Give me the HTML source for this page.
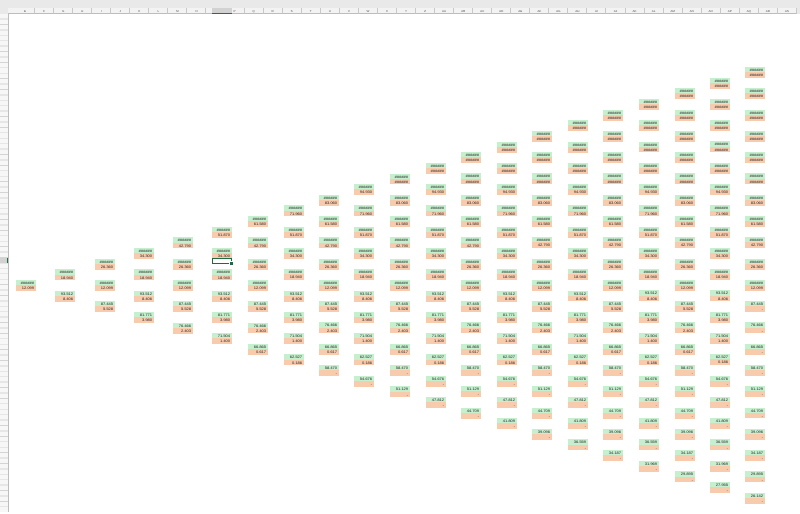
<!DOCTYPE html>
<html><head><meta charset="utf-8"><style>
html,body{margin:0;padding:0;background:#fff;width:800px;height:512px;overflow:hidden;font-family:"Liberation Sans",sans-serif}
#top{position:absolute;left:0;top:0;width:800px;height:14px;background:#e9e9e9}
#hdr{position:absolute;left:16px;top:8px;height:6px;display:flex;background:#f3f3f3}
#hdr span{width:19.05px;height:6px;box-sizing:border-box;border-right:1px solid #c8c8c8;border-bottom:1px solid #bdbdbd;font-size:3px;line-height:6px;text-align:center;color:#555}
#nar{position:absolute;left:8px;top:8px;width:8px;height:6px;background:#f3f3f3;border-bottom:1px solid #bdbdbd;box-sizing:border-box}
#rows{position:absolute;left:0;top:14px;width:8px;height:498px;background:repeating-linear-gradient(#f7f7f7 0 4.6px,#d4d4d4 4.6px 5.42px);border-right:1px solid #bdbdbd}
#selc{position:absolute;left:212px;top:8px;width:20px;height:6px;background:#d2d2d2;border-bottom:1.5px solid #217346;box-sizing:border-box}
#selr{position:absolute;left:0;top:258px;width:8px;height:5.4px;background:#d2d2d2;border-right:1.5px solid #217346;box-sizing:border-box}
#box{position:absolute;left:211.5px;top:257.5px;width:20px;height:6px;border:1.3px solid #1e6b3f;box-sizing:border-box}
#box:after{content:"";position:absolute;right:-3px;bottom:-3px;width:3px;height:3px;background:#1e6b3f;border:0.5px solid #fff}
.c{position:absolute;width:20px}
.c p{margin:0 0 10.3px;width:20px}
.c b,.c u{display:block;text-decoration:none;font-weight:normal;font-size:4px;text-align:right;padding-right:2px;box-sizing:border-box;color:#222;overflow:hidden;white-space:nowrap}
.c b{height:5.2px;line-height:5.2px;background:#c6efce}
.c u{height:5.8px;line-height:5.8px;background:#f8cbad}
</style></head><body>
<div id="top"></div>
<div id="nar"></div>
<div id="hdr"><span>E</span><span>F</span><span>G</span><span>H</span><span>I</span><span>J</span><span>K</span><span>L</span><span>M</span><span>N</span><span>O</span><span>P</span><span>Q</span><span>R</span><span>S</span><span>T</span><span>U</span><span>V</span><span>W</span><span>X</span><span>Y</span><span>Z</span><span>AA</span><span>AB</span><span>AC</span><span>AD</span><span>AE</span><span>AF</span><span>AG</span><span>AH</span><span>AI</span><span>AJ</span><span>AK</span><span>AL</span><span>AM</span><span>AN</span><span>AO</span><span>AP</span><span>AQ</span><span>AR</span><span>AS</span></div>
<div id="selc"></div>
<div id="rows"></div>
<div id="selr"></div>

<div class="c" style="left:16px;top:280px"><p><b>######</b><u>12.099</u></p></div>

<div class="c" style="left:55px;top:269.35px"><p><b>######</b><u>18.940</u><p><b>93.512</b><u>8.406</u></p></div>

<div class="c" style="left:95px;top:258.7px"><p><b>######</b><u>26.360</u><p><b>######</b><u>12.099</u><p><b>87.445</b><u>5.528</u></p></div>

<div class="c" style="left:134px;top:248.05px"><p><b>######</b><u>34.300</u><p><b>######</b><u>18.940</u><p><b>93.512</b><u>8.406</u><p><b>81.771</b><u>3.980</u></p></div>

<div class="c" style="left:173px;top:237.4px"><p><b>######</b><u>42.790</u><p><b>######</b><u>26.360</u><p><b>######</b><u>12.099</u><p><b>87.445</b><u>5.528</u><p><b>76.466</b><u>2.403</u></p></div>

<div class="c" style="left:212px;top:226.75px"><p><b>######</b><u>51.870</u><p><b>######</b><u>34.300</u><p><b>######</b><u>18.940</u><p><b>93.512</b><u>8.406</u><p><b>81.771</b><u>3.980</u><p><b>71.504</b><u>1.400</u></p></div>

<div class="c" style="left:248px;top:216.1px"><p><b>######</b><u>61.580</u><p><b>######</b><u>42.790</u><p><b>######</b><u>26.360</u><p><b>######</b><u>12.099</u><p><b>87.445</b><u>5.528</u><p><b>76.466</b><u>2.403</u><p><b>66.865</b><u>0.617</u></p></div>

<div class="c" style="left:284px;top:205.45px"><p><b>######</b><u>71.960</u><p><b>######</b><u>51.870</u><p><b>######</b><u>34.300</u><p><b>######</b><u>18.940</u><p><b>93.512</b><u>8.406</u><p><b>81.771</b><u>3.980</u><p><b>71.504</b><u>1.400</u><p><b>62.527</b><u>0.186</u></p></div>

<div class="c" style="left:319px;top:194.8px"><p><b>######</b><u>83.060</u><p><b>######</b><u>61.580</u><p><b>######</b><u>42.790</u><p><b>######</b><u>26.360</u><p><b>######</b><u>12.099</u><p><b>87.445</b><u>5.528</u><p><b>76.466</b><u>2.403</u><p><b>66.865</b><u>0.617</u><p><b>58.470</b><u>-</u></p></div>

<div class="c" style="left:354px;top:184.15px"><p><b>######</b><u>94.930</u><p><b>######</b><u>71.960</u><p><b>######</b><u>51.870</u><p><b>######</b><u>34.300</u><p><b>######</b><u>18.940</u><p><b>93.512</b><u>8.406</u><p><b>81.771</b><u>3.980</u><p><b>71.504</b><u>1.400</u><p><b>62.527</b><u>0.186</u><p><b>54.676</b><u>-</u></p></div>

<div class="c" style="left:390px;top:173.5px"><p><b>######</b><u>######</u><p><b>######</b><u>83.060</u><p><b>######</b><u>61.580</u><p><b>######</b><u>42.790</u><p><b>######</b><u>26.360</u><p><b>######</b><u>12.099</u><p><b>87.445</b><u>5.528</u><p><b>76.466</b><u>2.403</u><p><b>66.865</b><u>0.617</u><p><b>58.470</b><u>-</u><p><b>51.129</b><u>-</u></p></div>

<div class="c" style="left:426px;top:162.85px"><p><b>######</b><u>######</u><p><b>######</b><u>94.930</u><p><b>######</b><u>71.960</u><p><b>######</b><u>51.870</u><p><b>######</b><u>34.300</u><p><b>######</b><u>18.940</u><p><b>93.512</b><u>8.406</u><p><b>81.771</b><u>3.980</u><p><b>71.504</b><u>1.400</u><p><b>62.527</b><u>0.186</u><p><b>54.676</b><u>-</u><p><b>47.812</b><u>-</u></p></div>

<div class="c" style="left:461px;top:152.2px"><p><b>######</b><u>######</u><p><b>######</b><u>######</u><p><b>######</b><u>83.060</u><p><b>######</b><u>61.580</u><p><b>######</b><u>42.790</u><p><b>######</b><u>26.360</u><p><b>######</b><u>12.099</u><p><b>87.445</b><u>5.528</u><p><b>76.466</b><u>2.403</u><p><b>66.865</b><u>0.617</u><p><b>58.470</b><u>-</u><p><b>51.129</b><u>-</u><p><b>44.709</b><u>-</u></p></div>

<div class="c" style="left:497px;top:141.55px"><p><b>######</b><u>######</u><p><b>######</b><u>######</u><p><b>######</b><u>94.930</u><p><b>######</b><u>71.960</u><p><b>######</b><u>51.870</u><p><b>######</b><u>34.300</u><p><b>######</b><u>18.940</u><p><b>93.512</b><u>8.406</u><p><b>81.771</b><u>3.980</u><p><b>71.504</b><u>1.400</u><p><b>62.527</b><u>0.186</u><p><b>54.676</b><u>-</u><p><b>47.812</b><u>-</u><p><b>41.809</b><u>-</u></p></div>

<div class="c" style="left:532px;top:130.9px"><p><b>######</b><u>######</u><p><b>######</b><u>######</u><p><b>######</b><u>######</u><p><b>######</b><u>83.060</u><p><b>######</b><u>61.580</u><p><b>######</b><u>42.790</u><p><b>######</b><u>26.360</u><p><b>######</b><u>12.099</u><p><b>87.445</b><u>5.528</u><p><b>76.466</b><u>2.403</u><p><b>66.865</b><u>0.617</u><p><b>58.470</b><u>-</u><p><b>51.129</b><u>-</u><p><b>44.709</b><u>-</u><p><b>39.096</b><u>-</u></p></div>

<div class="c" style="left:568px;top:120.25px"><p><b>######</b><u>######</u><p><b>######</b><u>######</u><p><b>######</b><u>######</u><p><b>######</b><u>94.930</u><p><b>######</b><u>71.960</u><p><b>######</b><u>51.870</u><p><b>######</b><u>34.300</u><p><b>######</b><u>18.940</u><p><b>93.512</b><u>8.406</u><p><b>81.771</b><u>3.980</u><p><b>71.504</b><u>1.400</u><p><b>62.527</b><u>0.186</u><p><b>54.676</b><u>-</u><p><b>47.812</b><u>-</u><p><b>41.809</b><u>-</u><p><b>36.559</b><u>-</u></p></div>

<div class="c" style="left:603px;top:109.6px"><p><b>######</b><u>######</u><p><b>######</b><u>######</u><p><b>######</b><u>######</u><p><b>######</b><u>######</u><p><b>######</b><u>83.060</u><p><b>######</b><u>61.580</u><p><b>######</b><u>42.790</u><p><b>######</b><u>26.360</u><p><b>######</b><u>12.099</u><p><b>87.445</b><u>5.528</u><p><b>76.466</b><u>2.403</u><p><b>66.865</b><u>0.617</u><p><b>58.470</b><u>-</u><p><b>51.129</b><u>-</u><p><b>44.709</b><u>-</u><p><b>39.096</b><u>-</u><p><b>34.187</b><u>-</u></p></div>

<div class="c" style="left:639px;top:98.95px"><p><b>######</b><u>######</u><p><b>######</b><u>######</u><p><b>######</b><u>######</u><p><b>######</b><u>######</u><p><b>######</b><u>94.930</u><p><b>######</b><u>71.960</u><p><b>######</b><u>51.870</u><p><b>######</b><u>34.300</u><p><b>######</b><u>18.940</u><p><b>93.512</b><u>8.406</u><p><b>81.771</b><u>3.980</u><p><b>71.504</b><u>1.400</u><p><b>62.527</b><u>0.186</u><p><b>54.676</b><u>-</u><p><b>47.812</b><u>-</u><p><b>41.809</b><u>-</u><p><b>36.559</b><u>-</u><p><b>31.969</b><u>-</u></p></div>

<div class="c" style="left:675px;top:88.3px"><p><b>######</b><u>######</u><p><b>######</b><u>######</u><p><b>######</b><u>######</u><p><b>######</b><u>######</u><p><b>######</b><u>######</u><p><b>######</b><u>83.060</u><p><b>######</b><u>61.580</u><p><b>######</b><u>42.790</u><p><b>######</b><u>26.360</u><p><b>######</b><u>12.099</u><p><b>87.445</b><u>5.528</u><p><b>76.466</b><u>2.403</u><p><b>66.865</b><u>0.617</u><p><b>58.470</b><u>-</u><p><b>51.129</b><u>-</u><p><b>44.709</b><u>-</u><p><b>39.096</b><u>-</u><p><b>34.187</b><u>-</u><p><b>29.895</b><u>-</u></p></div>

<div class="c" style="left:710px;top:77.65px"><p><b>######</b><u>######</u><p><b>######</b><u>######</u><p><b>######</b><u>######</u><p><b>######</b><u>######</u><p><b>######</b><u>######</u><p><b>######</b><u>94.930</u><p><b>######</b><u>71.960</u><p><b>######</b><u>51.870</u><p><b>######</b><u>34.300</u><p><b>######</b><u>18.940</u><p><b>93.512</b><u>8.406</u><p><b>81.771</b><u>3.980</u><p><b>71.504</b><u>1.400</u><p><b>62.527</b><u>0.186</u><p><b>54.676</b><u>-</u><p><b>47.812</b><u>-</u><p><b>41.809</b><u>-</u><p><b>36.559</b><u>-</u><p><b>31.969</b><u>-</u><p><b>27.955</b><u>-</u></p></div>

<div class="c" style="left:745px;top:67px"><p><b>######</b><u>######</u><p><b>######</b><u>######</u><p><b>######</b><u>######</u><p><b>######</b><u>######</u><p><b>######</b><u>######</u><p><b>######</b><u>######</u><p><b>######</b><u>83.060</u><p><b>######</b><u>61.580</u><p><b>######</b><u>42.790</u><p><b>######</b><u>26.360</u><p><b>######</b><u>12.099</u><p><b>87.445</b><u>-</u><p><b>76.466</b><u>-</u><p><b>66.865</b><u>-</u><p><b>58.470</b><u>-</u><p><b>51.129</b><u>-</u><p><b>44.709</b><u>-</u><p><b>39.096</b><u>-</u><p><b>34.187</b><u>-</u><p><b>29.895</b><u>-</u><p><b>26.142</b><u>-</u></p></div>

<div id="box"></div>
</body></html>
